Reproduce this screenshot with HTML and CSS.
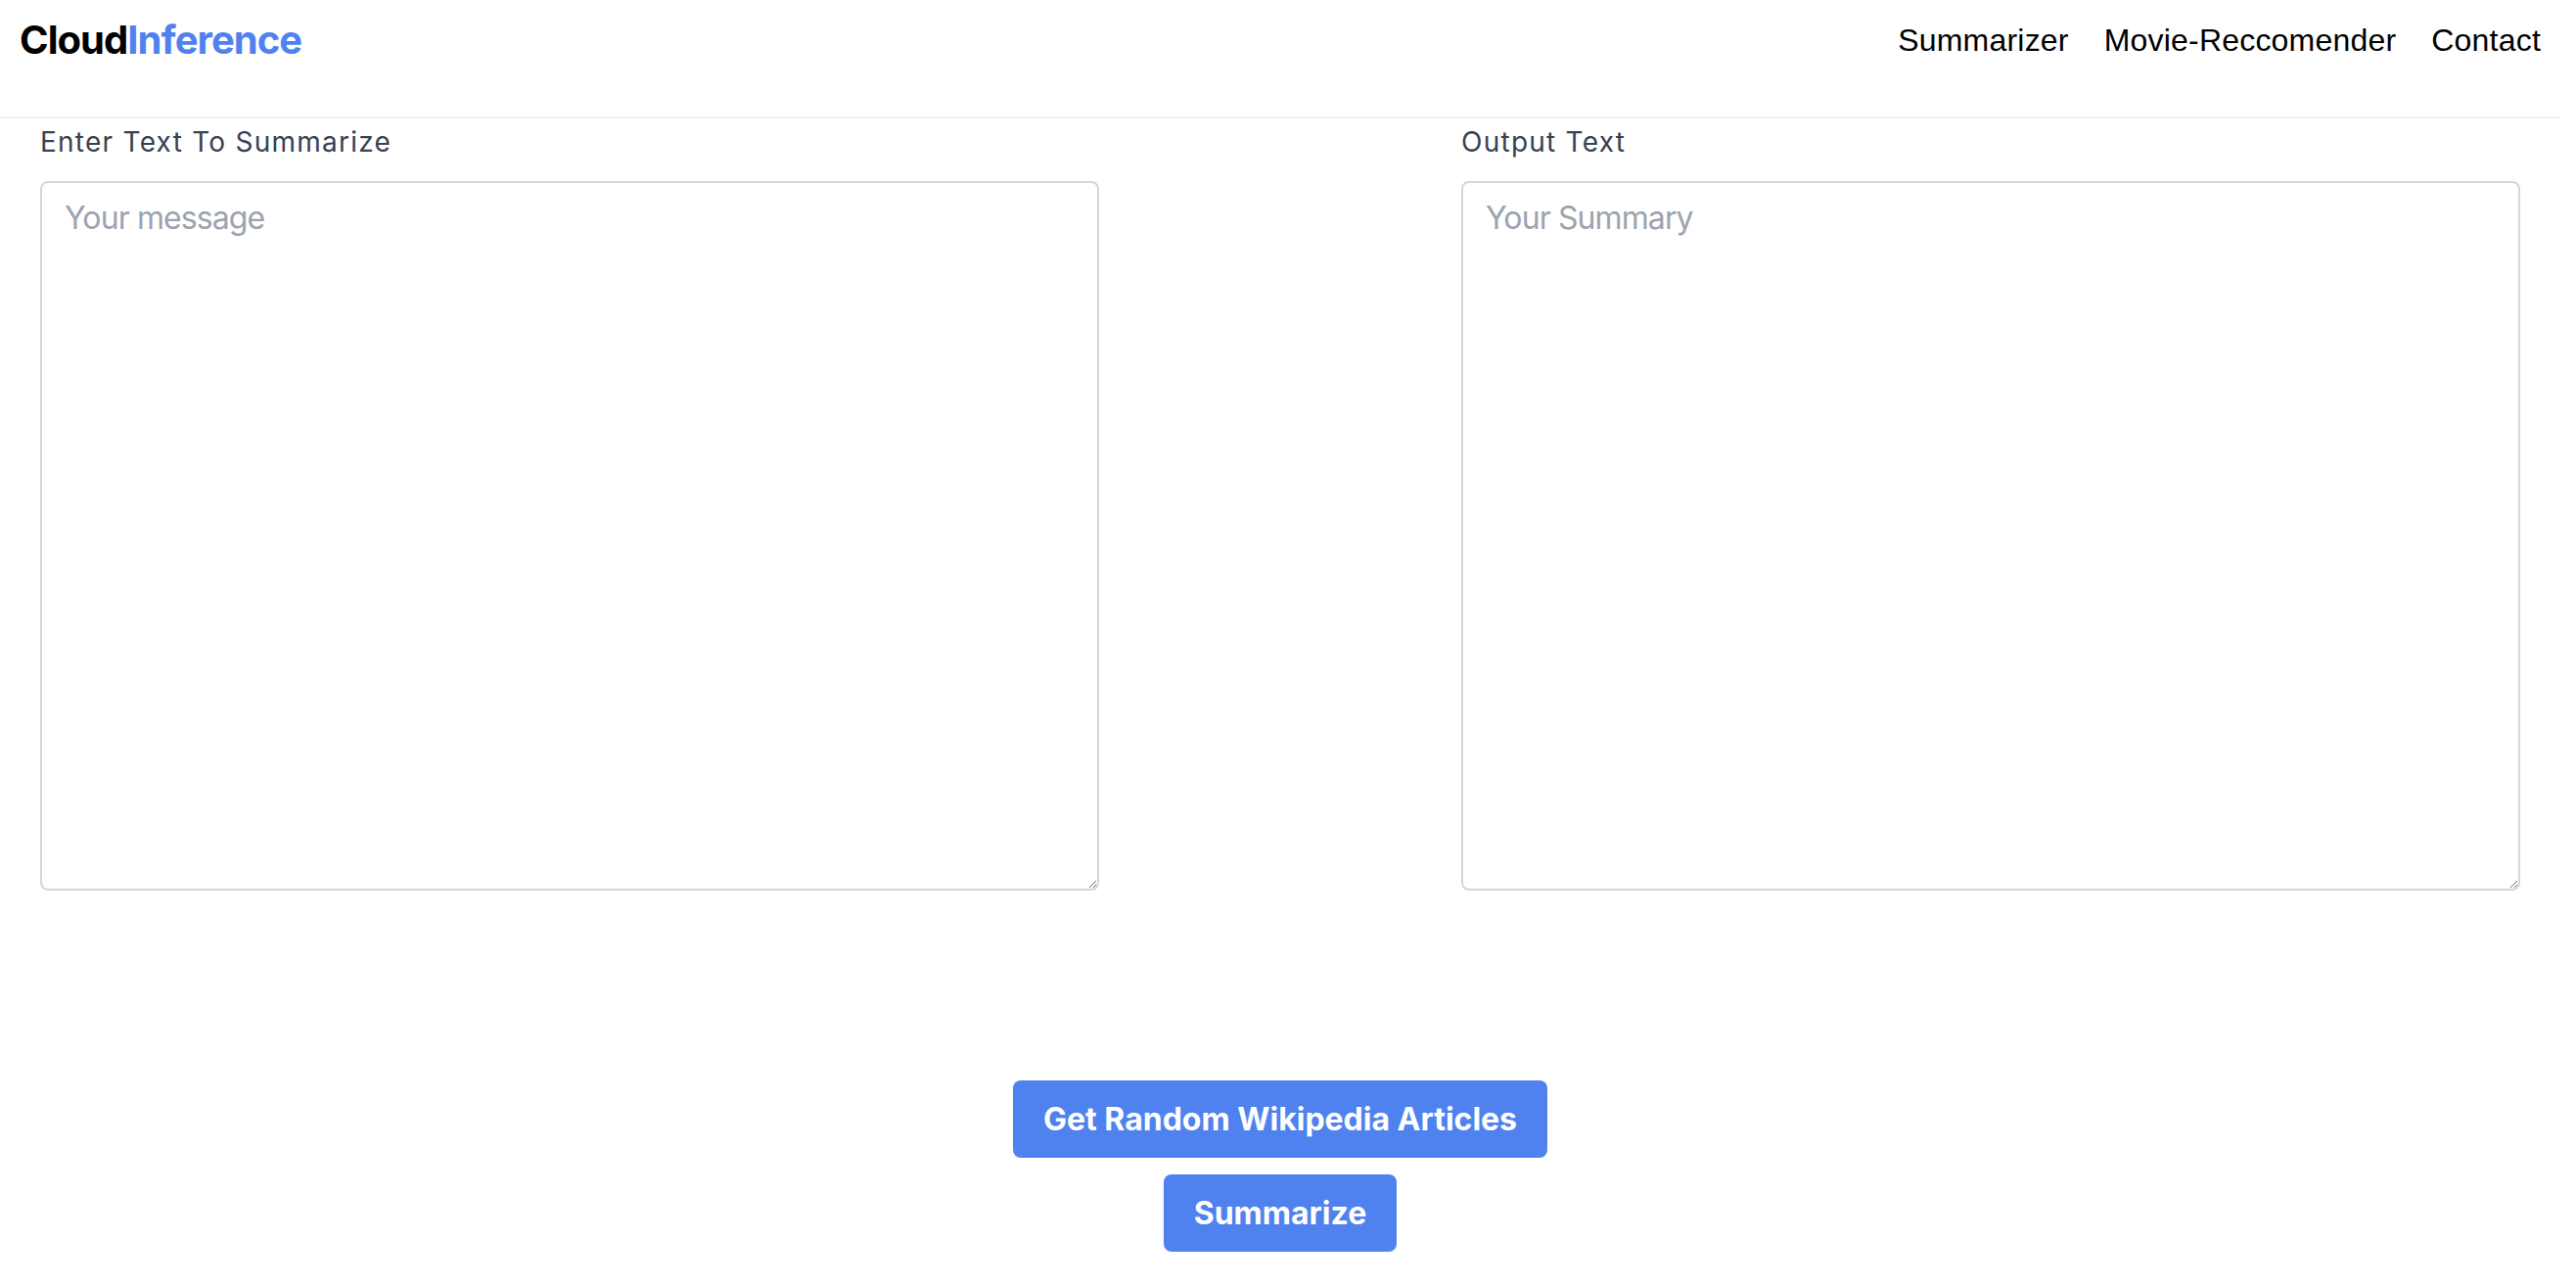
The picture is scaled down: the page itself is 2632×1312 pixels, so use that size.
FILE: index.html
```html
<!DOCTYPE html>
<html lang="en">
<head>
<meta charset="utf-8">
<title>CloudInference</title>
<link rel="stylesheet" href="styles.css">
</head>
<body>
<div class="page">
  <header class="header">
    <div class="header-row">
      <a class="logo" href="#"><span class="logo-dark">Cloud</span><span class="logo-blue">Inference</span></a>
      <nav class="nav">
        <a class="nav-link" href="#">Summarizer</a>
        <a class="nav-link" href="#">Movie-Reccomender</a>
        <a class="nav-link" href="#">Contact</a>
      </nav>
    </div>
  </header>
  <main class="main">
    <div class="columns">
      <div class="column">
        <label class="label" for="input">Enter Text To Summarize</label>
        <textarea id="input" class="textarea" placeholder="Your message"></textarea>
      </div>
      <div class="column">
        <label class="label" for="output">Output Text</label>
        <textarea id="output" class="textarea" placeholder="Your Summary"></textarea>
      </div>
    </div>
    <div class="actions">
      <button class="btn" type="button">Get Random Wikipedia Articles</button>
      <button class="btn" type="button">Summarize</button>
    </div>
  </main>
</div>
</body>
</html>
```
FILE: styles.css
```css
* { box-sizing: border-box; }
html, body { margin: 0; padding: 0; background: #ffffff; }
body { font-family: Inter, "Noto Sans", sans-serif; }
.page { width: 2616px; }

.header {
  height: 121px;
  padding: 0 20px 38px;
  border-bottom: 2px solid #f2f3f5;
}
.header-row {
  height: 81px;
  display: flex;
  align-items: center;
  justify-content: space-between;
}
.logo {
  font-family: Inter, sans-serif;
  font-weight: 700;
  font-size: 40px;
  line-height: 56px;
  text-decoration: none;
  letter-spacing: -0.95px;
}
.logo-dark { color: #000000; }
.logo-blue { color: #4f82ee; }
.nav { display: flex; gap: 36px; }
.nav-link {
  font-family: "Liberation Sans", Arial, sans-serif;
  font-size: 32px;
  line-height: 48px;
  letter-spacing: 0.2px;
  color: #000000;
  text-decoration: none;
}

.main { padding: 4px 41px 0; }
.columns {
  display: flex;
  justify-content: space-between;
}
.column { width: 1082px; display: flex; flex-direction: column; }
.label {
  font-size: 28px;
  line-height: 40px;
  letter-spacing: 1.25px;
  color: #374151;
  margin-bottom: 20px;
}
.textarea {
  width: 1082px;
  height: 725px;
  border: 2px solid #d4d6dc;
  border-radius: 8px;
  padding: 12px 23px;
  font-family: Inter, sans-serif;
  font-size: 32px;
  line-height: 48px;
  letter-spacing: -0.9px;
  color: #111827;
  background: #fff;
  outline: none;
}
.textarea::placeholder { color: #9ca3af; }

.actions {
  margin-top: 194px;
  display: flex;
  flex-direction: column;
  align-items: center;
  gap: 17px;
}
.btn {
  font-family: Inter, sans-serif;
  font-weight: 700;
  font-size: 32px;
  line-height: 48px;
  color: #ffffff;
  background: #4f82ee;
  border: none;
  border-radius: 8px;
  padding: 16px 31px;
  height: 79px;
}
```
